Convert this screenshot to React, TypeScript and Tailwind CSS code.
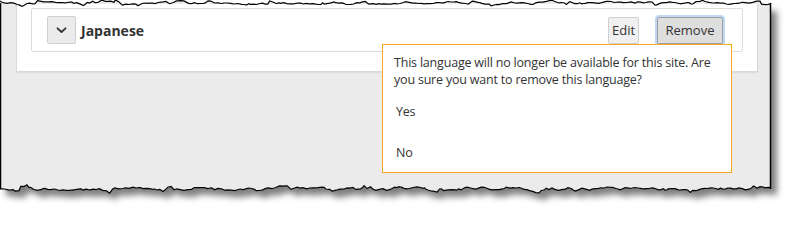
import type { ReactNode } from 'react';

// seeded jitter so the torn edges are the same on every render
function rng(seed: number) {
  let s = seed;
  return () => {
    s = (s * 16807) % 2147483647;
    return (s - 1) / 2147483646;
  };
}

// small random walk with the odd notch, like a torn sheet
function tornEdge(seed: number, x0: number, x1: number, yBase: number, amp: number) {
  const r = rng(seed);
  const pts: string[] = [];
  const dir = x1 > x0 ? 1 : -1;
  let y = yBase;
  let x = x0;
  while (dir > 0 ? x <= x1 : x >= x1) {
    y += (r() - 0.5) * amp;
    y += (yBase - y) * 0.35;
    if (r() > 0.88) y += (r() - 0.5) * amp * 1.6;
    pts.push(`${x.toFixed(1)},${y.toFixed(1)}`);
    x += dir * (1.5 + r() * 2.5);
  }
  pts.push(`${x1},${yBase}`);
  return pts;
}

const W = 771;
const top = tornEdge(7, 0, W, 3, 3);
const bottom = tornEdge(31, W, 0, 189, 4);
const paperPath = `M${top.join(' L')} L${bottom.join(' L')} Z`;
const topLine = `M${top.join(' L')}`;
const bottomLine = `M${bottom.join(' L')}`;

function ChevronDown() {
  return (
    <svg width="13" height="12" viewBox="0 0 13 12" fill="none">
      <path d="M2.5 4.3 6.5 8l4-3.7" stroke="#333" strokeWidth="1.8" strokeLinecap="round" strokeLinejoin="round" />
    </svg>
  );
}

function Button({ children, className }: { children: ReactNode; className: string }) {
  return (
    <button className={`h-[27px] rounded-[2px] border text-[13px] leading-none text-[#333] ${className}`}>{children}</button>
  );
}

export default function App() {
  return (
    <div className="relative h-[210px] w-[788px] overflow-hidden bg-white font-['Open_Sans','Liberation_Sans',sans-serif]">
      {/* paper with torn top and bottom */}
      <svg className="absolute left-0 top-0" width="788" height="210">
        <defs>
          <filter id="sh" x="-5%" y="-10%" width="115%" height="130%">
            <feDropShadow dx="6" dy="7" stdDeviation="3" floodColor="#000" floodOpacity="0.5" />
          </filter>
        </defs>
        <path d={paperPath} fill="#ebebeb" filter="url(#sh)" />
      </svg>

      <div className="relative mx-[1px] mt-[4px] h-[184px] w-[770px] overflow-hidden">
        {/* language list card */}
        <div className="ml-[15px] mt-[-14px] h-[82px] w-[742px] border border-[#d9d9d9] bg-white pt-[17px] shadow-[0_1px_1px_rgba(0,0,0,0.06)]">
          <div className="ml-[14px] flex h-[44px] w-[712px] items-center rounded-[2px] border border-[#dcdcdc] bg-white pl-[15px] pr-[19px]">
            <button className="flex h-[28px] w-[29px] items-center justify-center rounded-[2px] border border-[#cfcfcf] bg-[#ebebeb]">
              <ChevronDown />
            </button>
            <span className="ml-[5px] text-[14px] font-bold text-[#333]">Japanese</span>
            <div className="ml-auto flex items-center">
              <Button className="w-[31px] border-[#cfcfcf] bg-[#f0f0f0]">Edit</Button>
              <Button className="ml-[18px] w-[66px] border-[#9e9e9e] bg-[#dedede] shadow-[0_0_0_2px_#bfd9f5]">Remove</Button>
            </div>
          </div>
        </div>

        {/* confirmation popover under Remove */}
        <div className="absolute left-[381px] top-[40px] h-[129px] w-[350px] border border-[#f5a623] bg-white pl-[11px] pr-[4px] pt-[9px] text-[12.5px] leading-[17px] tracking-[-0.2px] text-[#333]">
          <p>This language will no longer be available for this site. Are you sure you want to remove this language?</p>
          <div className="mt-[15px] pl-[2px]">Yes</div>
          <div className="mt-[24px] pl-[2px]">No</div>
        </div>
      </div>

      <svg className="pointer-events-none absolute left-0 top-0" width="788" height="210">
        <path d={topLine} fill="none" stroke="#000" strokeWidth="1.2" />
        <path d={bottomLine} fill="none" stroke="#000" strokeWidth="1.2" />
        <line x1="0.5" y1={3} x2="0.5" y2={189} stroke="#000" strokeWidth="1.5" />
        <line x1={W - 0.5} y1={3} x2={W - 0.5} y2={189} stroke="#000" strokeWidth="1.5" />
      </svg>
    </div>
  );
}
